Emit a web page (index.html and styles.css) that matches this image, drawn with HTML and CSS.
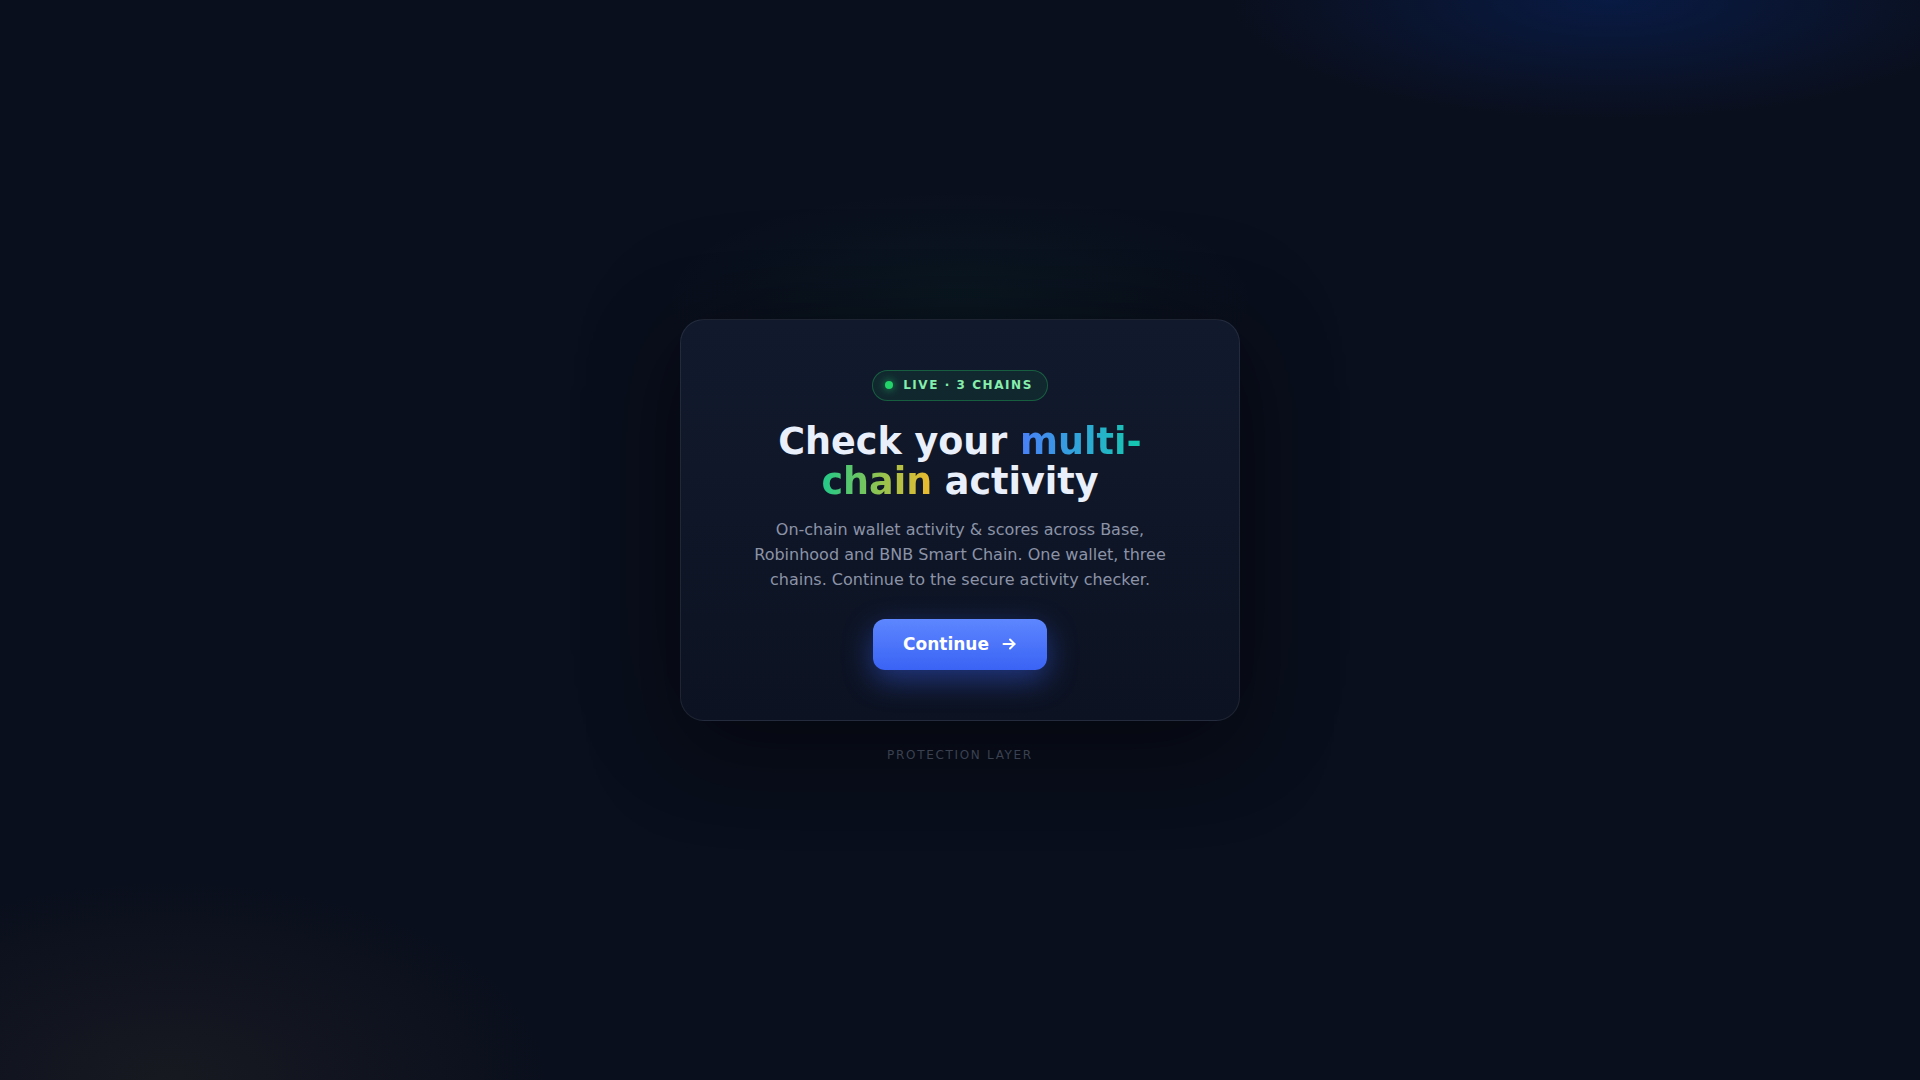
FILE: index.html
```html
<!DOCTYPE html>
<html lang="en">
<head>
<meta charset="utf-8">
<title>Multi-chain activity</title>
<link rel="stylesheet" href="styles.css">
</head>
<body>
<main class="page">
  <section class="card">
    <div class="badge"><span class="dot"></span><span class="badge-text">LIVE · 3 CHAINS</span></div>
    <h1 class="title"><span class="line">Check your <span class="grad g1">multi-</span></span><span class="line"><span class="grad g2">chain</span> activity</span></h1>
    <p class="lead">On-chain wallet activity &amp; scores across Base, Robinhood and BNB Smart Chain. One wallet, three chains. Continue to the secure activity checker.</p>
    <button class="btn" type="button">
      <span>Continue</span>
      <svg class="arrow" width="16" height="16" viewBox="0 0 16 16" fill="none" stroke="currentColor" stroke-width="2" stroke-linecap="round" stroke-linejoin="round"><path d="M2.5 8h11"/><path d="M9 3.5 13.5 8 9 12.5"/></svg>
    </button>
  </section>
  <div class="foot">PROTECTION LAYER</div>
</main>
</body>
</html>
```

FILE: styles.css
```css
* { box-sizing: border-box; }
html, body { height: 100%; }
body {
  margin: 0;
  font-family: "DejaVu Sans", "Noto Sans", sans-serif;
  background-color: #0a0f1d;
  background-image:
    radial-gradient(ellipse 380px 120px at 1610px 0px, rgba(8, 30, 80, 0.75), rgba(8, 30, 80, 0) 100%),
    radial-gradient(ellipse 300px 110px at 960px 300px, rgba(16, 185, 129, 0.05), rgba(16, 185, 129, 0) 100%),
    radial-gradient(ellipse 380px 200px at 170px 1080px, rgba(120, 100, 60, 0.12), rgba(120, 100, 60, 0) 100%);
  color: #e8edfb;
}
.page {
  min-height: 100vh;
  padding-top: 3px;
  display: flex;
  flex-direction: column;
  align-items: center;
  justify-content: center;
}
.card {
  width: 560px;
  padding: 50px 48px 50.5px;
  border: 1px solid rgba(255, 255, 255, 0.08);
  border-radius: 24px;
  background: linear-gradient(180deg, #111a2d 0%, #0c1221 100%);
  box-shadow: 0 30px 90px rgba(0, 0, 0, 0.42), 0 0 110px rgba(0, 0, 0, 0.22);
  display: flex;
  flex-direction: column;
  align-items: center;
  text-align: center;
}
.badge {
  display: inline-flex;
  align-items: center;
  gap: 10px;
  height: 31px;
  padding: 0 14px 0 12px;
  border: 1px solid rgba(34, 197, 94, 0.35);
  border-radius: 999px;
  background: rgba(34, 197, 94, 0.09);
}
.dot {
  width: 8px;
  height: 8px;
  border-radius: 50%;
  background: #22d46a;
  box-shadow: 0 0 8px rgba(34, 212, 106, 0.8);
}
.badge-text {
  font-size: 12px;
  font-weight: 700;
  letter-spacing: 0.13em;
  color: #86efac;
  line-height: 17px;
}
.title {
  margin: 21px 0 0;
  font-size: 36.5px;
  font-weight: 700;
  color: #eaeffc;
  display: flex;
  flex-direction: column;
  align-items: center;
}
.line {
  display: block;
  height: 40px;
  line-height: 40px;
  white-space: nowrap;
}
.grad {
  -webkit-background-clip: text;
  background-clip: text;
  color: transparent;
}
.g1 { background-image: linear-gradient(90deg, #4a7ff8 0%, #2fa6d8 50%, #12c9ab 100%); }
.g2 { background-image: linear-gradient(90deg, #1fc98a 0%, #8cc452 50%, #efba2c 100%); }
.lead {
  margin: 15px 0 0;
  max-width: 420px;
  font-size: 16px;
  line-height: 25.1px;
  color: #8c93a7;
}
.btn {
  margin-top: 27px;
  height: 51px;
  padding: 0 30px;
  display: inline-flex;
  align-items: center;
  gap: 12px;
  border: 0;
  border-radius: 12px;
  background: linear-gradient(180deg, #5d86ff 0%, #3a63f5 100%);
  box-shadow: 0 10px 30px rgba(59, 99, 246, 0.45);
  color: #ffffff;
  font-family: "DejaVu Sans", "Noto Sans", sans-serif;
  font-size: 17px;
  font-weight: 700;
  cursor: pointer;
}
.arrow { display: block; }
.foot {
  margin-top: 25px;
  font-size: 12px;
  letter-spacing: 0.14em;
  color: #3a4151;
  line-height: 18px;
}
```
